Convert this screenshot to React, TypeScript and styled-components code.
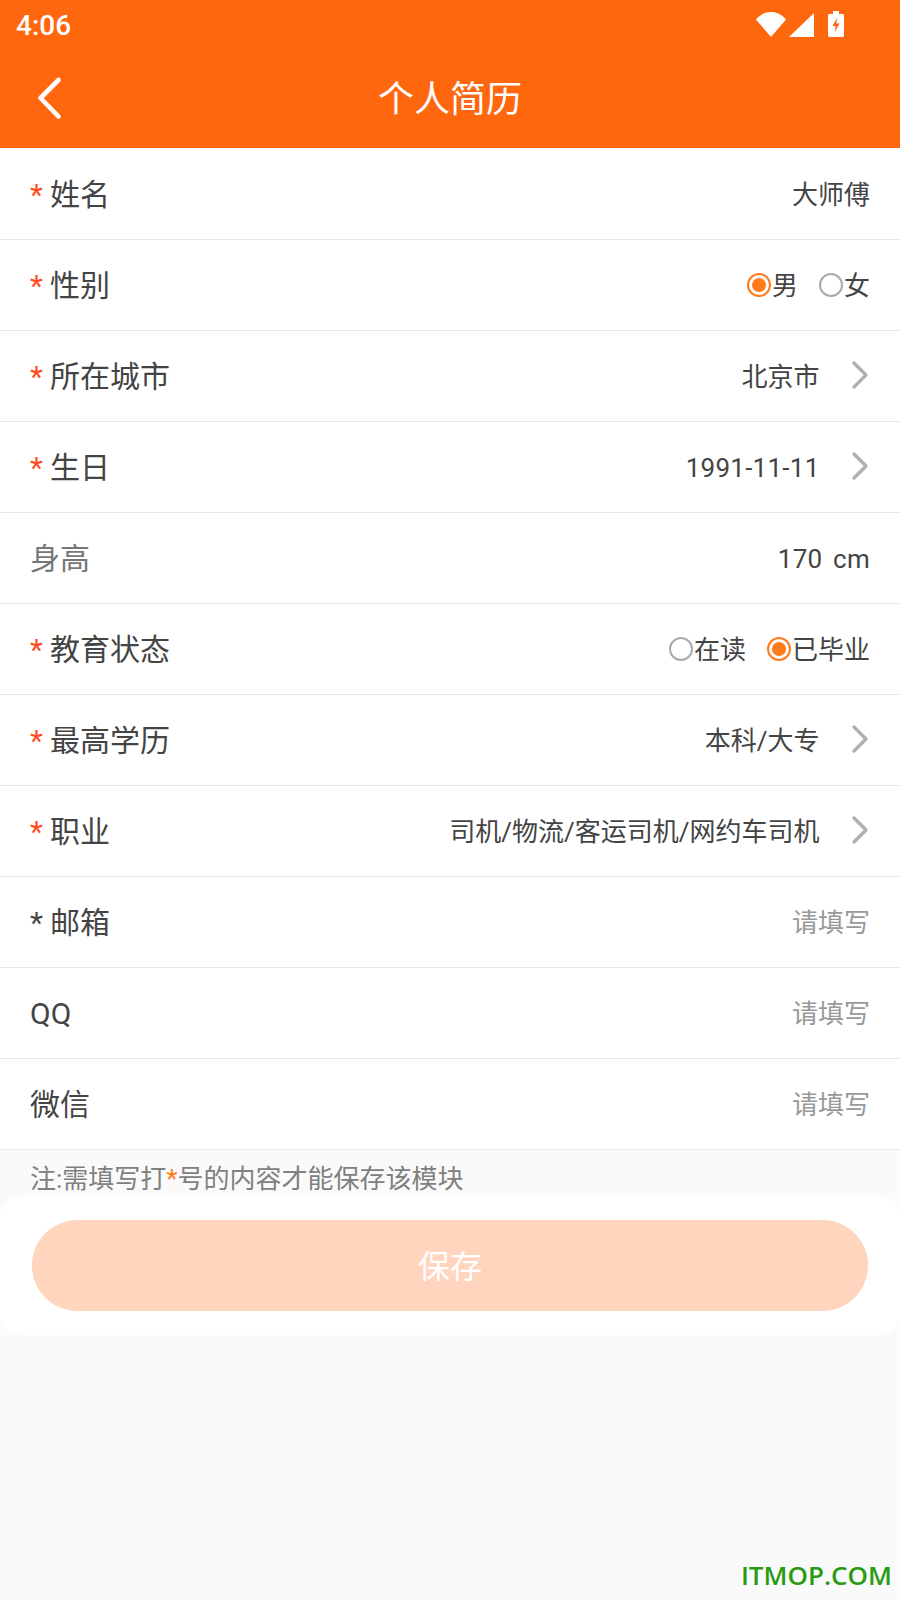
import React from 'react'
import styled, { createGlobalStyle } from 'styled-components'

const Global = createGlobalStyle`
  html, body { margin: 0; padding: 0; background: #fafafa; }
  * { box-sizing: border-box; }
  body { font-family: Roboto, "Noto Sans CJK SC", sans-serif; }
`

const Page = styled.div`
  position: relative;
  width: 900px;
  height: 1600px;
  overflow: hidden;
  background: #fafafa;
`

const Header = styled.header`
  height: 148px;
  background: #ff670f;
  color: #fff;
  display: flex;
  flex-direction: column;
`

const StatusBar = styled.div`
  height: 50px;
  display: flex;
  align-items: center;
  justify-content: space-between;
  padding: 0 56px 0 16px;
`

const Clock = styled.span`
  font-size: 28px;
  font-weight: 500;
`

const StatusIcons = styled.div`
  display: flex;
  align-items: flex-end;
  height: 26px;
  margin-top: -2px;
`

const Signal = styled.svg`
  margin: 0 14px 0 3px;
`

const NavBar = styled.div`
  height: 98px;
  display: flex;
  align-items: center;
  justify-content: center;
  position: relative;
  padding-bottom: 6px;
`

const BackIcon = styled.svg`
  position: absolute;
  left: 35px;
  top: 25px;
`

const Title = styled.h1`
  margin: 0;
  font-size: 36px;
  font-weight: 400;
  font-family: "Noto Sans CJK SC", sans-serif;
`

const List = styled.div`
  background: #fff;
  padding-top: 1px;
`

const Row = styled.div`
  height: 91px;
  display: flex;
  align-items: center;
  justify-content: space-between;
  padding: 0 30px 3px;
  border-bottom: 1px solid #e8e8e8;
`

const Label = styled.div<{ $muted?: boolean }>`
  font-size: 30px;
  margin-bottom: 2px;
  color: ${p => (p.$muted ? '#777' : '#444')};
  font-family: Roboto, "Noto Sans CJK SC", sans-serif;
`

const LatinLabel = styled(Label)`
  margin-bottom: 0;
  padding-top: 4px;
`

const Star = styled.span<{ $plain?: boolean }>`
  color: ${p => (p.$plain ? '#444' : '#ff4b1f')};
  margin-right: 7px;
`

const Right = styled.div`
  display: flex;
  align-items: center;
`

const Value = styled.span<{ $placeholder?: boolean }>`
  font-size: 26px;
  color: ${p => (p.$placeholder ? '#999' : '#444')};
`

const NumberValue = styled.span`
  font-size: 26px;
  color: #444;
  letter-spacing: 0.25px;
  word-spacing: 4px;
  padding-top: 5px;
`

const Chevron = styled.svg`
  margin-left: 31.5px;
  margin-right: 1px;
  flex: none;
`

const RadioGroup = styled.div`
  display: flex;
  gap: 21px;
`

const RadioItem = styled.span`
  display: flex;
  align-items: center;
  font-size: 26px;
  color: #444;
`

const RadioDot = styled.span<{ $on?: boolean }>`
  width: 24px;
  height: 24px;
  border-radius: 50%;
  border: 2px solid ${p => (p.$on ? '#ff7a1a' : '#aaa')};
  display: flex;
  align-items: center;
  justify-content: center;
  margin-right: 1px;
  transform: translateY(1px);
  &::after {
    content: '';
    width: 14px;
    height: 14px;
    border-radius: 50%;
    background: ${p => (p.$on ? '#ff7a1a' : 'transparent')};
  }
`

const Note = styled.div`
  height: 46px;
  padding: 12px 0 0 30px;
  font-size: 26px;
  line-height: 34px;
  color: #808080;
  white-space: nowrap;
`

const NoteStar = styled.span`
  color: #ff7a1a;
`

const Footer = styled.div`
  background: #fff;
  border-radius: 20px;
  padding: 24px 32px;
  height: 139px;
`

const SaveButton = styled.button`
  width: 100%;
  height: 91px;
  border: 0;
  padding: 0 0 4px;
  border-radius: 46px;
  background: #ffd5bd;
  color: #fff;
  font-size: 32px;
  font-family: "Noto Sans CJK SC", sans-serif;
`

const Watermark = styled.div`
  position: absolute;
  right: 8px;
  bottom: 7px;
  font-family: "Open Sans", sans-serif;
  font-size: 26px;
  font-weight: 600;
  color: #2a9a14;
`

const Arrow = () => (
  <Chevron width="18" height="30" viewBox="0 0 18 30" fill="none">
    <path d="M3 3 L15 15 L3 27" stroke="#b0b0b0" strokeWidth="3.4" strokeLinecap="round" strokeLinejoin="round" />
  </Chevron>
)

const Radio = ({ on, text }: { on?: boolean; text: string }) => (
  <RadioItem>
    <RadioDot $on={on} />
    {text}
  </RadioItem>
)

const Required = ({ text, plain }: { text: string; plain?: boolean }) => (
  <Label>
    <Star $plain={plain}>*</Star>
    {text}
  </Label>
)

const App: React.FC = () => {
  return (
    <Page>
      <Global />
      <Header>
        <StatusBar>
          <Clock>4:06</Clock>
          <StatusIcons>
            <svg width="30" height="25" viewBox="0 0 30 25" fill="#fff">
              <path d="M0 7.5 C8 -2.5 22 -2.5 30 7.5 L15 25 Z" />
            </svg>
            <Signal width="25" height="24" viewBox="0 0 25 24" fill="#fff">
              <path d="M0 24 L25 0 V24 Z" />
            </Signal>
            <svg width="16" height="26" viewBox="0 0 16 26">
              <path fill="#fff" d="M5 0 H11 V3 H14.5 Q16 3 16 4.5 V24.5 Q16 26 14.5 26 H1.5 Q0 26 0 24.5 V4.5 Q0 3 1.5 3 H5 Z" />
              <path fill="#ff670f" d="M9 7 L4.5 15 H7.5 L7 21 L11.5 12.5 H8.5 Z" />
            </svg>
          </StatusIcons>
        </StatusBar>
        <NavBar>
          <BackIcon width="28" height="46" viewBox="0 0 28 46" fill="none">
            <path d="M23.5 5 L5.5 23 L23.5 41.5" stroke="#fff" strokeWidth="4.6" strokeLinecap="round" strokeLinejoin="round" />
          </BackIcon>
          <Title>个人简历</Title>
        </NavBar>
      </Header>
      <List>
        <Row>
          <Required text="姓名" />
          <Value>大师傅</Value>
        </Row>
        <Row>
          <Required text="性别" />
          <RadioGroup>
            <Radio on text="男" />
            <Radio text="女" />
          </RadioGroup>
        </Row>
        <Row>
          <Required text="所在城市" />
          <Right>
            <Value>北京市</Value>
            <Arrow />
          </Right>
        </Row>
        <Row>
          <Required text="生日" />
          <Right>
            <NumberValue>1991-11-11</NumberValue>
            <Arrow />
          </Right>
        </Row>
        <Row>
          <Label $muted>身高</Label>
          <NumberValue>170 cm</NumberValue>
        </Row>
        <Row>
          <Required text="教育状态" />
          <RadioGroup>
            <Radio text="在读" />
            <Radio on text="已毕业" />
          </RadioGroup>
        </Row>
        <Row>
          <Required text="最高学历" />
          <Right>
            <Value>本科/大专</Value>
            <Arrow />
          </Right>
        </Row>
        <Row>
          <Required text="职业" />
          <Right>
            <Value>司机/物流/客运司机/网约车司机</Value>
            <Arrow />
          </Right>
        </Row>
        <Row>
          <Required plain text="邮箱" />
          <Value $placeholder>请填写</Value>
        </Row>
        <Row>
          <LatinLabel>QQ</LatinLabel>
          <Value $placeholder>请填写</Value>
        </Row>
        <Row>
          <Label>微信</Label>
          <Value $placeholder>请填写</Value>
        </Row>
      </List>
      <Note>
        注:需填写打<NoteStar>*</NoteStar>号的内容才能保存该模块
      </Note>
      <Footer>
        <SaveButton>保存</SaveButton>
      </Footer>
      <Watermark>ITMOP.COM</Watermark>
    </Page>
  )
}

export default App
